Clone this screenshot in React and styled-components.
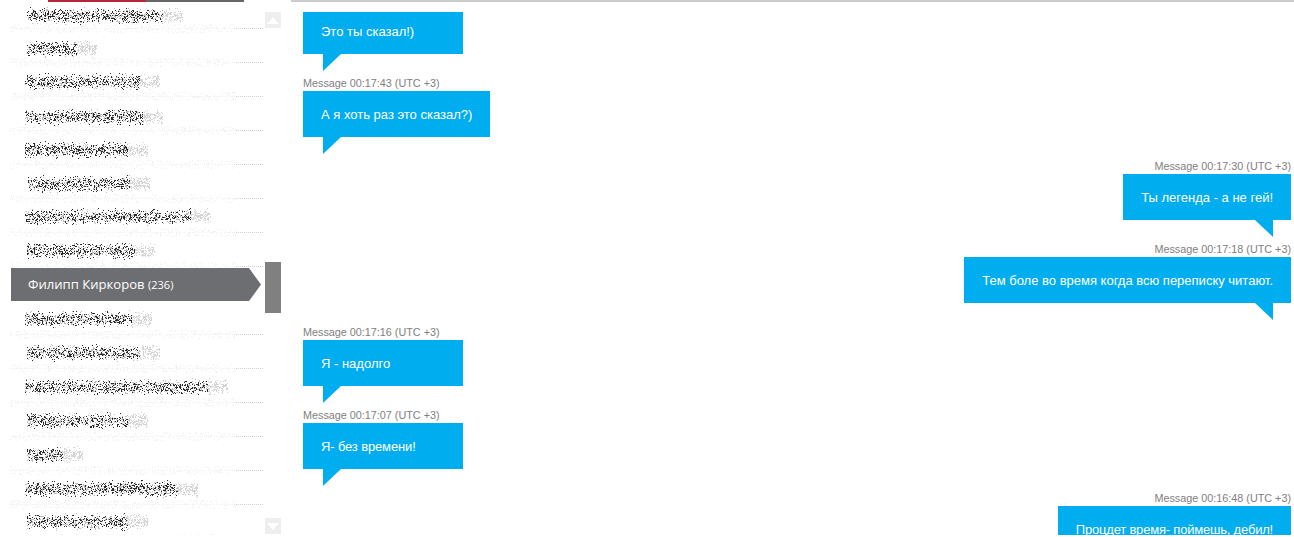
import { useMemo } from "react";
import styled, { createGlobalStyle } from "styled-components";

const contacts = [
  { x: 27, width: 156, seed: 3, lift: 6 },
  { x: 27, width: 70, seed: 11, lift: 7 },
  { x: 25, width: 135, seed: 17, lift: 8 },
  { x: 25, width: 138, seed: 23, lift: 7 },
  { x: 25, width: 123, seed: 31, lift: 8 },
  { x: 28, width: 122, seed: 37, lift: 8 },
  { x: 25, width: 186, seed: 41, lift: 9 },
  { x: 27, width: 128, seed: 47, lift: 9 },
  { selected: true, name: "Филипп Киркоров", count: 236 },
  { x: 25, width: 127, seed: 53, lift: 9 },
  { x: 27, width: 133, seed: 59, lift: 9 },
  { x: 25, width: 203, seed: 61, lift: 9 },
  { x: 27, width: 121, seed: 67, lift: 9 },
  { x: 27, width: 56, seed: 71, lift: 9 },
  { x: 25, width: 173, seed: 73, lift: 9 },
  { x: 27, width: 121, seed: 79, lift: 10 },
];

const messages = [
  { side: "left", text: "Это ты сказал!)", compact: true },
  { side: "left", time: "00:17:43", text: "А я хоть раз это сказал?)" },
  { side: "right", time: "00:17:30", text: "Ты легенда - а не гей!" },
  { side: "right", time: "00:17:18", text: "Тем боле во время когда всю переписку читают." },
  { side: "left", time: "00:17:16", text: "Я - надолго" },
  { side: "left", time: "00:17:07", text: "Я- без времени!", tight: 0.14 },
  { side: "right", time: "00:16:48", text: "Процдет время- поймешь, дебил!", tight: 0.2 },
];

// small seeded generator so the scrambled names stay the same on every load
const makeRandom = (seed) => {
  let s = seed * 7919 + 13;
  return () => {
    s = (s * 1664525 + 1013904223) % 4294967296;
    return s / 4294967296;
  };
};

const dot = (x, y) => `M${x} ${y}h1v1h-1z`;

const ScrambledName = ({ width, seed }) => {
  const { dark, mid, light } = useMemo(() => {
    const random = makeRandom(seed);
    let dark = "";
    let mid = "";
    let light = "";
    const core = width - 20;
    for (let x = 0; x < width; x++) {
      for (let y = 0; y < 20; y++) {
        const band = Math.max(0, 1 - Math.abs(y - 9.5) / 9.5);
        const strength = Math.min(1, band * 1.35) ** 1.6;
        const r = random();
        if (x < core) {
          if (r < strength * 0.27) dark += dot(x, y);
          else if (r < strength * 0.5) mid += dot(x, y);
        } else if (r < strength * 0.5) {
          light += dot(x, y);
        }
      }
    }
    return { dark, mid, light };
  }, [width, seed]);

  return (
    <NoiseSvg width={width} height={20} viewBox={`0 0 ${width} 20`}>
      <path d={mid} fill="#bcbcbc" />
      <path d={light} fill="#d4d4d4" />
      <path d={dark} fill="#2a2a2a" />
    </NoiseSvg>
  );
};

const RowLine = ({ seed }) => {
  const { faint, dots } = useMemo(() => {
    const random = makeRandom(seed + 100);
    let faint = "";
    let dots = "";
    for (let x = 0; x < 226; x++) {
      for (let y = 0; y < 9; y++) {
        if (random() < 0.16) faint += dot(x, y);
      }
      if (x % 2 === 0) faint += dot(x, 4);
    }
    for (let x = 226; x < 254; x += 2) dots += dot(x, 4);
    return { faint, dots };
  }, [seed]);

  return (
    <LineSvg width={254} height={9} viewBox="0 0 254 9">
      <path d={faint} fill="#f2f2f2" />
      <path d={dots} fill="#d0d0d0" />
    </LineSvg>
  );
};

const App = () => {
  return (
    <>
      <GlobalStyle />
      <Page>
        <Sidebar>
          <TopTab>
            <TabRed />
            <TabGray />
          </TopTab>
          <ListArea>
            <ContactList>
              {contacts.map((c, i) =>
                c.selected ? (
                  <SelectedRow key={c.name}>
                    {c.name} <Count>({c.count})</Count>
                  </SelectedRow>
                ) : (
                  <ContactRow key={c.seed} $first={i === 0} $lift={c.lift} $x={c.x}>
                    <ScrambledName width={c.width} seed={c.seed} />
                    <RowLine seed={c.seed} />
                  </ContactRow>
                )
              )}
            </ContactList>
            <ScrollTrack>
              <ScrollButton>
                <UpArrow />
              </ScrollButton>
              <ScrollThumb />
              <ScrollButton $last>
                <DownArrow />
              </ScrollButton>
            </ScrollTrack>
          </ListArea>
        </Sidebar>
        <Chat>
          {messages.map((m, i) => (
            <Message key={i} $side={m.side}>
              {m.time && <Stamp>Message {m.time} (UTC +3)</Stamp>}
              <Bubble $side={m.side} $compact={m.compact} $tight={m.tight}>
                {m.text}
              </Bubble>
            </Message>
          ))}
        </Chat>
      </Page>
    </>
  );
};

export default App;

const GlobalStyle = createGlobalStyle`
  html, body {
    margin: 0;
    background: #ffffff;
  }
`;

const Page = styled.div`
  display: flex;
  width: 1294px;
  height: 537px;
  overflow: hidden;
  background: #ffffff;
`;

const Sidebar = styled.aside`
  position: relative;
  flex: 0 0 291px;
  height: 535px;
  overflow: hidden;
`;

const TopTab = styled.div`
  position: absolute;
  top: 0;
  left: 48px;
  display: flex;
  height: 2px;
  z-index: 2;
`;

const TabRed = styled.div`
  width: 98px;
  background: #b7263a;
`;

const TabGray = styled.div`
  width: 98px;
  background: #666666;
`;

const ListArea = styled.div`
  display: flex;
  height: 100%;
`;

const ContactList = styled.div`
  width: 254px;
  margin-left: 10px;
  flex: none;
`;

const ContactRow = styled.div`
  position: relative;
  box-sizing: border-box;
  display: flex;
  align-items: flex-end;
  height: ${(p) => (p.$first ? "29px" : "34px")};
  padding-left: ${(p) => p.$x - 10}px;
  padding-bottom: ${(p) => p.$lift - 3}px;
`;

const NoiseSvg = styled.svg`
  display: block;
  flex: none;
  position: relative;
  z-index: 1;
`;

const LineSvg = styled.svg`
  position: absolute;
  left: 0;
  bottom: -4px;
`;

const SelectedRow = styled.div`
  position: relative;
  z-index: 1;
  box-sizing: border-box;
  width: 250px;
  height: 33px;
  margin: 1px 0 0 1px;
  padding-left: 17px;
  line-height: 33px;
  font-family: "Open Sans", sans-serif;
  font-size: 13.1px;
  color: #ffffff;
  background: #6d6e71;
  clip-path: polygon(0 0, 238px 0, 100% 50%, 238px 100%, 0 100%);
`;

const Count = styled.span`
  font-size: 11px;
`;

const ScrollTrack = styled.div`
  display: flex;
  flex-direction: column;
  width: 16px;
  margin-left: 1px;
  padding: 12px 0 1px;
  box-sizing: border-box;
`;

const ScrollButton = styled.div`
  display: flex;
  align-items: center;
  justify-content: center;
  flex: none;
  height: 16px;
  margin-top: ${(p) => (p.$last ? "auto" : "0")};
  background: #eeeeee;
`;

const UpArrow = styled.div`
  width: 0;
  height: 0;
  border-left: 6px solid transparent;
  border-right: 6px solid transparent;
  border-bottom: 7px solid #ffffff;
`;

const DownArrow = styled.div`
  width: 0;
  height: 0;
  border-left: 6px solid transparent;
  border-right: 6px solid transparent;
  border-top: 7px solid #ffffff;
`;

const ScrollThumb = styled.div`
  flex: none;
  height: 51px;
  margin-top: 234px;
  background: #808080;
`;

const Chat = styled.main`
  flex: 1;
  box-sizing: border-box;
  height: 535px;
  overflow: hidden;
  padding: 10px 3px 0 12px;
  border-top: 2px solid #cccccc;
`;

const Message = styled.div`
  display: flex;
  flex-direction: column;
  align-items: ${(p) => (p.$side === "right" ? "flex-end" : "flex-start")};
`;

const Stamp = styled.div`
  height: 20px;
  line-height: 24px;
  font-family: "Liberation Sans", Arial, sans-serif;
  font-size: 10.8px;
  color: #808080;
`;

const Bubble = styled.div`
  position: relative;
  box-sizing: border-box;
  min-width: 160px;
  height: ${(p) => (p.$compact ? "42px" : "46px")};
  margin-bottom: 17px;
  padding: 0 18px;
  line-height: ${(p) => (p.$compact ? "40px" : "47px")};
  font-family: "Liberation Sans", Arial, sans-serif;
  font-size: 13px;
  letter-spacing: ${(p) => (p.$tight ? `-${p.$tight}px` : "normal")};
  white-space: nowrap;
  color: #ffffff;
  background: #00adef;

  &::after {
    content: "";
    position: absolute;
    top: 100%;
    ${(p) => (p.$side === "right" ? "right: 18px;" : "left: 20px;")}
    width: 18px;
    height: 17px;
    background: #00adef;
    clip-path: ${(p) =>
      p.$side === "right"
        ? "polygon(0 0, 100% 0, 100% 100%)"
        : "polygon(0 0, 100% 0, 0 100%)"};
  }
`;
